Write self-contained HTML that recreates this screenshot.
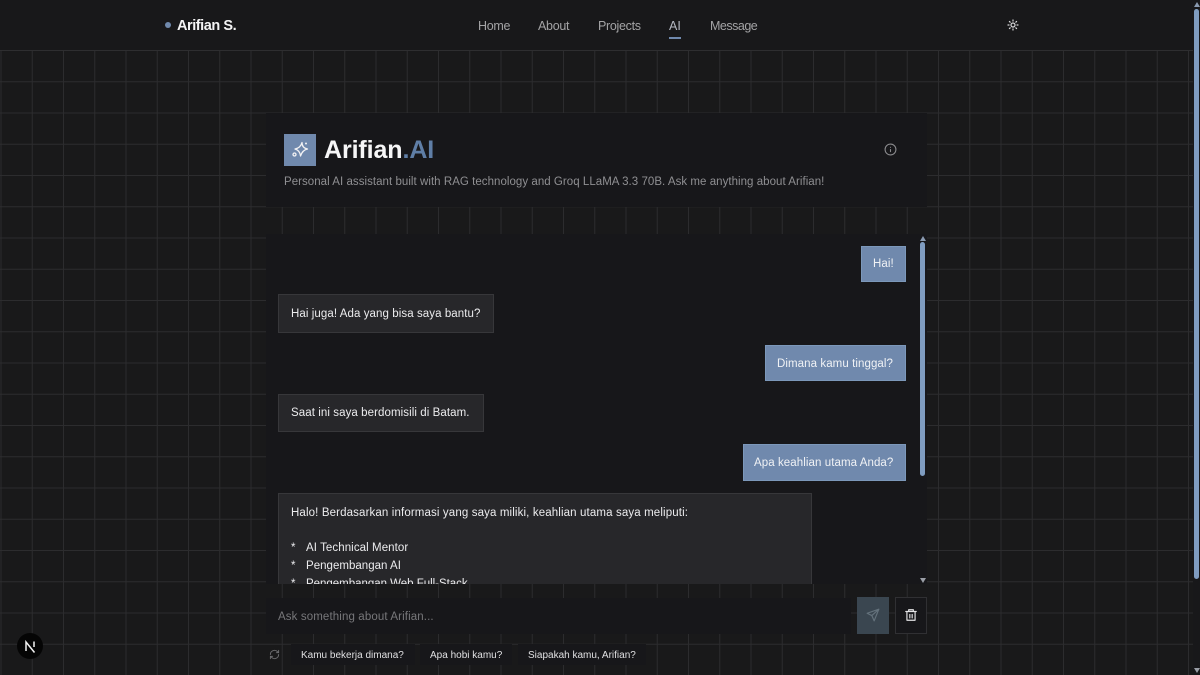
<!DOCTYPE html>
<html lang="id">
<head>
<meta charset="utf-8">
<title>Arifian.AI</title>
<style>
html,body{margin:0;padding:0;width:1200px;height:675px;overflow:hidden;background:#19191a;}
body{position:relative;font-family:"Liberation Sans",sans-serif;color:#e8e8ea;}
#grid{position:absolute;left:0;top:50px;width:1193px;height:625px;background-color:#19191a;
background-image:linear-gradient(to right,#2c2c2e 1px,transparent 1px),linear-gradient(to bottom,#2c2c2e 1px,transparent 1px);
background-size:31.25px 31.25px;background-position:.5px 0;}
#nav{position:absolute;left:0;top:0;width:1193px;height:50px;background:#18181a;border-bottom:1px solid #2e2e30;}
.t{position:absolute;white-space:nowrap;line-height:16px;}
.box{position:absolute;box-sizing:border-box;}
.panel{background:#17171a;}
.nl{font-size:12.5px;color:#a3a3a5;top:18px;letter-spacing:-.3px;}
.u{background:#7089ad;color:#f0f2f5;border:1px solid #7c98ba;}
.a{background:#27272a;border:1px solid #37373a;}
.m{font-size:11.5px;letter-spacing:.08px;color:#ececee;}
.c{font-size:10px;color:#e0e0e2;top:648px;}
svg{position:absolute;display:block;}
</style>
</head>
<body>
<div id="grid"></div>
<div id="nav"></div>

<div class="box" style="left:165px;top:22px;width:6px;height:6px;border-radius:50%;background:#7089ad;"></div>
<div class="t" style="left:177px;top:18px;font-size:14.5px;font-weight:bold;color:#f4f4f5;letter-spacing:-.45px;">Arifian S.</div>
<div class="t nl" style="left:478px;">Home</div>
<div class="t nl" style="left:538px;">About</div>
<div class="t nl" style="left:598px;">Projects</div>
<div class="t nl" style="left:669px;color:#b4b8c2;letter-spacing:0;">AI</div>
<div class="box" style="left:669px;top:37px;width:12px;height:2px;background:#7089ad;"></div>
<div class="t nl" style="left:710px;letter-spacing:-.5px;">Message</div>
<svg style="left:1007px;top:19px" width="12" height="12" viewBox="0 0 24 24" fill="none" stroke="#d8d8da" stroke-width="2.4" stroke-linecap="round"><circle cx="12" cy="12" r="4"/><path d="M12 2v2M12 20v2M4.9 4.9l1.4 1.4M17.7 17.7l1.4 1.4M2 12h2M20 12h2M4.9 19.1l1.4-1.4M17.7 6.3l1.4-1.4"/></svg>

<!-- header panel -->
<div class="box panel" style="left:266px;top:113px;width:661px;height:94px;"></div>
<div class="box" style="left:284px;top:134px;width:32px;height:32px;background:#7089ad;"></div>
<svg style="left:284px;top:134px" width="32" height="32" viewBox="0 0 32 32" fill="none" stroke="#f2f2f4" stroke-width="1.3" stroke-linejoin="round"><path d="M18 8.500Q18 14 23.500 15Q18.500 16 16.500 22Q16 16.500 11 15Q16.500 14 18 8.500Z"/><circle cx="22" cy="9.500" r="1" fill="#f2f2f4" stroke="none"/><circle cx="10.500" cy="20.500" r="1.500"/></svg>
<div class="t" style="left:324px;top:135px;font-size:25px;line-height:31px;font-weight:bold;color:#f6f6f7;letter-spacing:-.1px;">Arifian<span style="color:#5f7ea6">.AI</span></div>
<div class="t" style="left:284px;top:174px;font-size:11.5px;color:#8f8f92;letter-spacing:.04px;">Personal AI assistant built with RAG technology and Groq LLaMA 3.3 70B. Ask me anything about Arifian!</div>
<svg style="left:884px;top:143px" width="13" height="13" viewBox="0 0 24 24" fill="none" stroke="#8a8a8d" stroke-width="2" stroke-linecap="round"><circle cx="12" cy="12" r="10"/><path d="M12 16v-4M12 8h.01"/></svg>

<!-- chat panel -->
<div class="box panel" style="left:266px;top:234px;width:661px;height:350px;overflow:hidden;">
  <div class="box u" style="left:595px;top:12px;width:45px;height:36px;"></div>
  <div class="t m" style="left:607px;top:22px;color:#f0f2f5;">Hai!</div>
  <div class="box a" style="left:12px;top:60px;width:216px;height:39px;"></div>
  <div class="t m" style="left:25px;top:72px;">Hai juga! Ada yang bisa saya bantu?</div>
  <div class="box u" style="left:499px;top:111px;width:141px;height:36px;"></div>
  <div class="t m" style="left:511px;top:122px;color:#f0f2f5;">Dimana kamu tinggal?</div>
  <div class="box a" style="left:12px;top:160px;width:206px;height:38px;"></div>
  <div class="t m" style="left:25px;top:171px;">Saat ini saya berdomisili di Batam.</div>
  <div class="box u" style="left:477px;top:210px;width:163px;height:37px;"></div>
  <div class="t m" style="left:488px;top:221px;color:#f0f2f5;">Apa keahlian utama Anda?</div>
  <div class="box a" style="left:12px;top:259px;width:534px;height:120px;"></div>
  <div class="t m" style="left:25px;top:271px;letter-spacing:.13px;">Halo! Berdasarkan informasi yang saya miliki, keahlian utama saya meliputi:</div>
  <div class="t m" style="left:25px;top:306px;">*</div><div class="t m" style="left:40px;top:306px;">AI Technical Mentor</div>
  <div class="t m" style="left:25px;top:324px;">*</div><div class="t m" style="left:40px;top:324px;letter-spacing:.02px;">Pengembangan AI</div>
  <div class="t m" style="left:25px;top:342px;">*</div><div class="t m" style="left:40px;top:342px;letter-spacing:-.02px;">Pengembangan Web Full-Stack</div>
</div>
<!-- inner scrollbar -->
<div class="box" style="left:920px;top:242px;width:5px;height:234px;border-radius:3px;background:#7f9cc0;"></div>
<svg style="left:920px;top:236px" width="6" height="5"><path d="M3 0L6 5H0z" fill="#8a9ab0"/></svg>
<svg style="left:920px;top:578px" width="6" height="5"><path d="M3 5L6 0H0z" fill="#9a9ea6"/></svg>

<!-- input row -->
<div class="box panel" style="left:266px;top:598px;width:585px;height:36px;"></div>
<div class="t" style="left:278px;top:609px;font-size:11.5px;color:#77777a;letter-spacing:.12px;">Ask something about Arifian...</div>
<div class="box" style="left:857px;top:597px;width:32px;height:37px;background:#3a4650;"></div>
<svg style="left:866px;top:608px" width="14" height="14" viewBox="0 0 24 24" fill="none" stroke="#64727c" stroke-width="2" stroke-linejoin="round"><path d="M22 2L2 9l8 4 4 9zM22 2L10 13"/></svg>
<div class="box" style="left:895px;top:597px;width:32px;height:37px;background:#17171a;border:1px solid #303033;"></div>
<svg style="left:904px;top:608px" width="14" height="14" viewBox="0 0 24 24" fill="none" stroke="#e4e4e6" stroke-width="2" stroke-linecap="round" stroke-linejoin="round"><path d="M3 6h18M8 6V3h8v3M19 6v15H5V6M10 11v6M14 11v6"/></svg>

<!-- suggestions -->
<svg style="left:269px;top:649px" width="11" height="11" viewBox="0 0 24 24" fill="none" stroke="#6e6e71" stroke-width="2" stroke-linecap="round" stroke-linejoin="round"><path d="M3 12a9 9 0 0 1 15.500-6.200L21 8M21 3v5h-5M21 12a9 9 0 0 1-15.500 6.200L3 16M3 21v-5h5"/></svg>
<div class="box panel" style="left:291px;top:644px;width:124px;height:21px;"></div>
<div class="box panel" style="left:420px;top:644px;width:92px;height:21px;"></div>
<div class="box panel" style="left:518px;top:644px;width:128px;height:21px;"></div>
<div class="t c" style="left:301px;">Kamu bekerja dimana?</div>
<div class="t c" style="left:430px;">Apa hobi kamu?</div>
<div class="t c" style="left:528px;">Siapakah kamu, Arifian?</div>

<!-- Next badge -->
<div class="box" style="left:17px;top:633px;width:26px;height:26px;border-radius:50%;background:#050505;"></div>
<svg style="left:17px;top:633px" width="26" height="26" viewBox="0 0 26 26" fill="none" stroke="#f2f2f2" stroke-width="1.5"><path d="M9 18V9L17.500 19.500M17 8.500V14"/></svg>

<!-- page scrollbar -->
<div class="box" style="left:1193px;top:0;width:7px;height:675px;background:#18181a;"></div>
<div class="box" style="left:1194px;top:9px;width:5px;height:570px;border-radius:3px;background:#7f9cc0;"></div>
<svg style="left:1194px;top:2px" width="6" height="5"><path d="M3 0L6 5H0z" fill="#8a9ab0"/></svg>
<svg style="left:1194px;top:668px" width="6" height="5"><path d="M3 5L6 0H0z" fill="#9a9ea6"/></svg>
</body>
</html>
